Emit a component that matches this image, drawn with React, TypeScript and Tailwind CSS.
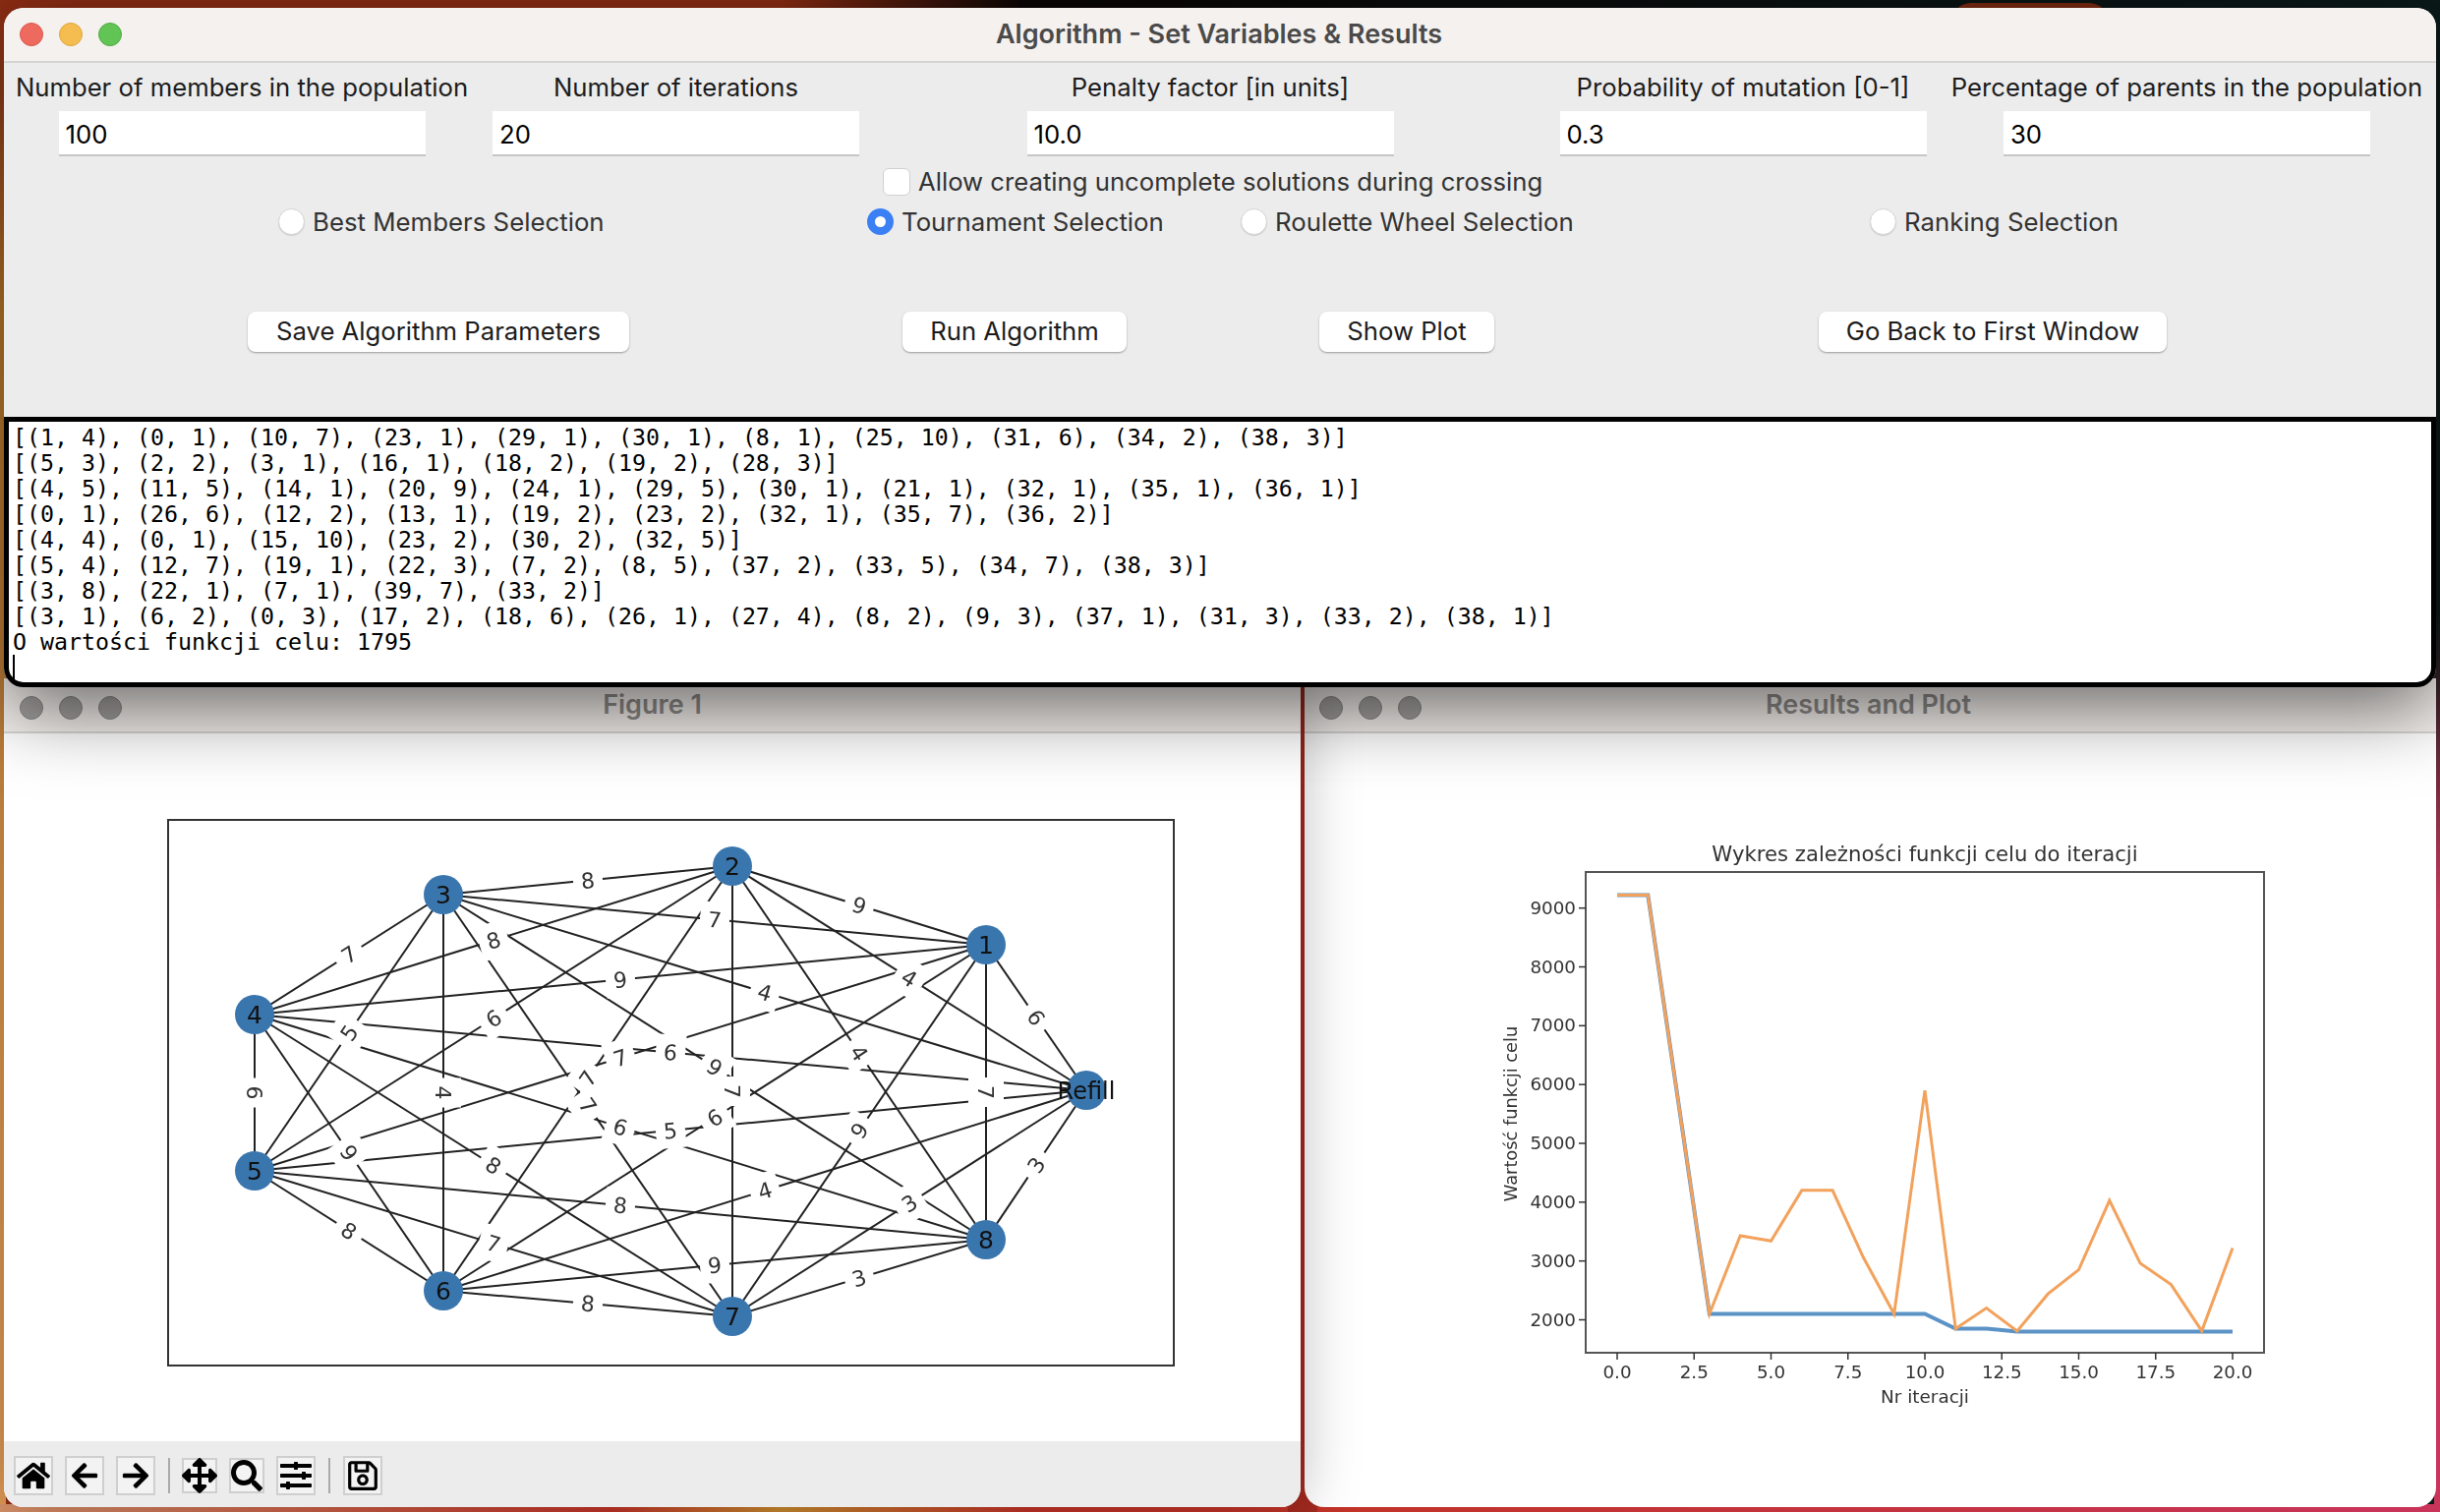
import { FaHome, FaArrowLeft, FaArrowRight, FaArrowsAlt, FaSearch, FaSlidersH, FaRegSave } from "react-icons/fa"

const nodes: Record<string, [number, number]> = {
  "1": [1003, 960],
  "2": [745, 880],
  "3": [451, 909],
  "4": [259, 1031],
  "5": [259, 1190],
  "6": [451, 1312],
  "7": [745, 1338],
  "8": [1003, 1260],
  Refill: [1105, 1108],
}

const edges: [string, string, number][] = [
  ["1", "2", 9], ["1", "3", 7], ["1", "4", 9], ["1", "5", 7], ["1", "6", 6], ["1", "7", 9], ["1", "8", 7], ["1", "Refill", 6],
  ["2", "3", 8], ["2", "4", 8], ["2", "5", 6], ["2", "6", 7], ["2", "7", 7], ["2", "8", 4], ["2", "Refill", 4],
  ["3", "4", 7], ["3", "5", 5], ["3", "6", 4], ["3", "7", 7], ["3", "8", 9], ["3", "Refill", 4],
  ["4", "5", 6], ["4", "6", 9], ["4", "7", 8], ["4", "8", 6], ["4", "Refill", 6],
  ["5", "6", 8], ["5", "7", 7], ["5", "8", 8], ["5", "Refill", 5],
  ["6", "7", 8], ["6", "8", 9], ["6", "Refill", 4],
  ["7", "8", 3], ["7", "Refill", 3],
  ["8", "Refill", 3],
]

const orange = [9220, 9220, 5660, 2100, 3430, 3340, 4200, 4200, 3060, 2100, 5900, 1850, 2200, 1810, 2440, 2850, 4030, 2960, 2600, 1810, 3220]
const blue = [9220, 9220, 5660, 2100, 2100, 2100, 2100, 2100, 2100, 2100, 2100, 1850, 1850, 1800, 1800, 1800, 1800, 1800, 1800, 1800, 1800]

const px = (i: number) => 1645 + i * 31.3
const py = (v: number) => 1340.5 - ((v - 2000) / 1000) * 59.83
const toPoints = (data: number[]) => data.map((v, i) => `${px(i)},${py(v)}`).join(" ")

const lines = [
  "[(1, 4), (0, 1), (10, 7), (23, 1), (29, 1), (30, 1), (8, 1), (25, 10), (31, 6), (34, 2), (38, 3)]",
  "[(5, 3), (2, 2), (3, 1), (16, 1), (18, 2), (19, 2), (28, 3)]",
  "[(4, 5), (11, 5), (14, 1), (20, 9), (24, 1), (29, 5), (30, 1), (21, 1), (32, 1), (35, 1), (36, 1)]",
  "[(0, 1), (26, 6), (12, 2), (13, 1), (19, 2), (23, 2), (32, 1), (35, 7), (36, 2)]",
  "[(4, 4), (0, 1), (15, 10), (23, 2), (30, 2), (32, 5)]",
  "[(5, 4), (12, 7), (19, 1), (22, 3), (7, 2), (8, 5), (37, 2), (33, 5), (34, 7), (38, 3)]",
  "[(3, 8), (22, 1), (7, 1), (39, 7), (33, 2)]",
  "[(3, 1), (6, 2), (0, 3), (17, 2), (18, 6), (26, 1), (27, 4), (8, 2), (9, 3), (37, 1), (31, 3), (33, 2), (38, 1)]",
  "O wartości funkcji celu: 1795",
]

function Field({ label, value }: { label: string; value: string }) {
  return (
    <div className="flex flex-col items-center">
      <div className="h-[30px] leading-[30px] text-[25.7px] text-[#1c1c1c] whitespace-nowrap">{label}</div>
      <input
        readOnly
        value={value}
        className="mt-[9px] w-[373px] h-[46px] bg-white pl-[7px] pt-[2px] text-[25.7px] text-black border-b-2 border-[#c6c6c6] outline-none"
      />
    </div>
  )
}

function Radio({ label, checked }: { label: string; checked?: boolean }) {
  return (
    <div className="flex items-center gap-[8px]">
      {checked ? (
        <div className="w-[27px] h-[27px] rounded-full bg-[#3b7ff5] flex items-center justify-center">
          <div className="w-[11px] h-[11px] rounded-full bg-white" />
        </div>
      ) : (
        <div className="w-[27px] h-[27px] rounded-full bg-white border border-[#d4d4d4] shadow-[0_1px_1px_rgba(0,0,0,0.12)]" />
      )}
      <span className="text-[25.8px] text-[#333] leading-[27px] whitespace-nowrap">{label}</span>
    </div>
  )
}

function Btn({ label, className }: { label: string; className: string }) {
  return (
    <button className={`h-[41px] bg-white rounded-[8px] text-[25.7px] text-[#1c1c1c] shadow-[0_1px_2px_rgba(0,0,0,0.35)] whitespace-nowrap ${className}`}>
      {label}
    </button>
  )
}

function Lights({ active }: { active?: boolean }) {
  const cls = "w-[24px] h-[24px] rounded-full"
  if (active)
    return (
      <div className="flex gap-[16px]">
        <div className={`${cls} bg-[#ee6a5f] border border-[#d9574d]`} />
        <div className={`${cls} bg-[#f5bd4f] border border-[#dfa63c]`} />
        <div className={`${cls} bg-[#61c454] border border-[#50ab44]`} />
      </div>
    )
  return (
    <div className="flex gap-[16px]">
      <div className={`${cls} bg-[#a5a3a1] border border-[#8c8a88]`} />
      <div className={`${cls} bg-[#a5a3a1] border border-[#8c8a88]`} />
      <div className={`${cls} bg-[#a5a3a1] border border-[#8c8a88]`} />
    </div>
  )
}

function ToolBtn({ children, small }: { children: React.ReactNode; small?: boolean }) {
  return (
    <div className={`flex items-center justify-center bg-[#f3f3f3] border-2 border-[#cfcfcf] text-black ${small ? "w-[36px] h-[36px]" : "w-[40px] h-[40px]"}`}>
      <div className="blur-[0.5px]">{children}</div>
    </div>
  )
}

function Graph() {
  return (
    <svg viewBox="150 820 1050 580" className="w-[1050px] h-[580px] ml-[146px] mt-[75px] blur-[0.5px]">
      <rect x="171" y="833" width="1023" height="555" fill="white" stroke="#333" strokeWidth="2" />
      {edges.map(([a, b]) => (
        <line key={a + b} x1={nodes[a][0]} y1={nodes[a][1]} x2={nodes[b][0]} y2={nodes[b][1]} stroke="#222" strokeWidth="2" />
      ))}
      {edges.map(([a, b, w]) => {
        const [x1, y1] = nodes[a]
        const [x2, y2] = nodes[b]
        const mx = (x1 + x2) / 2
        const my = (y1 + y2) / 2
        let ang = (Math.atan2(y2 - y1, x2 - x1) * 180) / Math.PI
        if (ang > 90) ang -= 180
        if (ang < -90) ang += 180
        return (
          <g key={a + b + "l"} transform={`rotate(${ang} ${mx} ${my})`}>
            <rect x={mx - 15} y={my - 18} width="30" height="36" fill="white" />
            <text x={mx} y={my + 8} textAnchor="middle" fontSize="22" fill="#333" fontFamily="'DejaVu Sans', sans-serif">
              {w}
            </text>
          </g>
        )
      })}
      {Object.entries(nodes).map(([k, [x, y]]) => (
        <g key={k}>
          <circle cx={x} cy={y} r="20" fill="#3a76ae" />
          <text x={x} y={y + 9} textAnchor="middle" fontSize={k === "Refill" ? 24 : 25} fill="#111" fontFamily="'DejaVu Sans', sans-serif">
            {k}
          </text>
        </g>
      ))}
    </svg>
  )
}

function Plot() {
  const font = "'DejaVu Sans', sans-serif"
  return (
    <svg viewBox="1500 840 850 600" className="w-[850px] h-[600px] ml-[173px] mt-[96px] blur-[0.7px]">
      <rect x="1613" y="885" width="690" height="489" fill="white" stroke="#555" strokeWidth="2" />
      {[2000, 3000, 4000, 5000, 6000, 7000, 8000, 9000].map((v) => (
        <g key={v}>
          <line x1="1606" x2="1613" y1={py(v)} y2={py(v)} stroke="#333" strokeWidth="1.5" />
          <text x="1603" y={py(v) + 6} textAnchor="end" fontSize="18.3" fill="#333" fontFamily={font}>
            {v}
          </text>
        </g>
      ))}
      {[0, 2.5, 5, 7.5, 10, 12.5, 15, 17.5, 20].map((v) => (
        <g key={v}>
          <line x1={px(v)} x2={px(v)} y1="1374" y2="1381" stroke="#333" strokeWidth="1.5" />
          <text x={px(v)} y="1400" textAnchor="middle" fontSize="18.3" fill="#333" fontFamily={font}>
            {v.toFixed(1)}
          </text>
        </g>
      ))}
      <polyline points={toPoints(blue)} fill="none" stroke="#5b93c6" strokeWidth="4" />
      <polyline points={toPoints(orange)} fill="none" stroke="#f2a25c" strokeWidth="3" />
      <text x="1958" y="874" textAnchor="middle" fontSize="21.2" fill="#333" fontFamily={font}>
        Wykres zależności funkcji celu do iteracji
      </text>
      <text x="1958" y="1425" textAnchor="middle" fontSize="18.4" fill="#333" fontFamily={font}>
        Nr iteracji
      </text>
      <text x="1543" y="1131" textAnchor="middle" fontSize="17.8" fill="#333" fontFamily={font} transform="rotate(-90 1543 1131)">
        Wartość funkcji celu
      </text>
    </svg>
  )
}

export default function App() {
  return (
    <div className="relative w-[2482px] h-[1538px] overflow-hidden font-['Inter',sans-serif] bg-[linear-gradient(90deg,#8f2d14_0%,#8f2d14_32%,#0a0605_42%,#0b1a1a_100%)]">
      {/* wallpaper edges */}
      <div className="absolute left-0 top-[8px] w-[6px] h-[1530px] bg-[linear-gradient(180deg,#8f2d14_0%,#c8802c_20%,#d8924a_60%,#e09a55_100%)]" />
      <div className="absolute right-0 top-[8px] w-[6px] h-[1530px] bg-[linear-gradient(180deg,#0b1a1a_0%,#0b1a1a_40%,#c23a58_60%,#c9345a_100%)]" />
      <div className="absolute left-0 bottom-0 w-full h-[8px] bg-[linear-gradient(90deg,#d8926a_0%,#c23328_25%,#c98a2e_32%,#c23328_42%,#c23328_55%,#c9345a_100%)]" />
      <div className="absolute left-[1310px] top-[690px] w-[30px] h-[850px] bg-[#a32a20]" />
      <div className="absolute left-[1985px] top-[3px] w-[160px] h-[20px] rounded-t-full bg-[#7c2a10]" />

      {/* right window */}
      <div className="absolute left-[1327px] top-[690px] w-[1151px] h-[843px] rounded-b-[20px] bg-white overflow-hidden flex flex-col">
        <div className="relative h-[56px] shrink-0 bg-[#f5f1ee] border-b-2 border-[#d8d6d4] flex items-center pt-[5px] pl-[15px]">
          <Lights />
          <div className="absolute left-0 right-0 top-[12px] text-center text-[27px] leading-[30px] font-semibold text-[#8e8c8a] pr-[4px]">Results and Plot</div>
        </div>
        <Plot />
      </div>

      {/* left window */}
      <div className="absolute left-[4px] top-[690px] w-[1319px] h-[843px] rounded-b-[20px] bg-white flex flex-col shadow-[0_0_60px_rgba(0,0,0,0.28)]">
        <div className="relative h-[56px] shrink-0 bg-[#f5f1ee] border-b-2 border-[#d8d6d4] flex items-center pt-[5px] pl-[16px]">
          <Lights />
          <div className="absolute left-0 right-0 top-[12px] text-center text-[27px] leading-[30px] font-semibold text-[#8e8c8a]">Figure 1</div>
        </div>
        <Graph />
        <div className="mt-auto h-[67px] bg-[#ececec] rounded-b-[20px] flex items-center pl-[10px] pt-[2px]">
          <ToolBtn><FaHome size={34} /></ToolBtn>
          <div className="ml-[12px]"><ToolBtn><FaArrowLeft size={30} /></ToolBtn></div>
          <div className="ml-[12px]"><ToolBtn><FaArrowRight size={30} /></ToolBtn></div>
          <div className="ml-[13px] w-[2px] h-[36px] bg-[#aaa]" />
          <div className="ml-[12px]"><ToolBtn small><FaArrowsAlt size={36} /></ToolBtn></div>
          <div className="ml-[12px]"><ToolBtn small><FaSearch size={32} /></ToolBtn></div>
          <div className="ml-[12px]"><ToolBtn><FaSlidersH size={32} /></ToolBtn></div>
          <div className="ml-[13px] w-[2px] h-[36px] bg-[#aaa]" />
          <div className="ml-[13px]"><ToolBtn><FaRegSave size={34} /></ToolBtn></div>
        </div>
      </div>

      {/* main window */}
      <div className="absolute left-[4px] top-[8px] w-[2474px] h-[691px] rounded-[20px] bg-[#ececec] flex flex-col shadow-[0_20px_80px_rgba(0,0,0,0.6)]">
        <div className="relative h-[56px] shrink-0 bg-[#f5f1ee] rounded-t-[20px] border-b-2 border-[#d6d4d2] flex items-center pl-[16px]">
          <Lights active />
          <div className="absolute left-0 right-0 top-[12px] text-center text-[27px] leading-[30px] font-semibold text-[#4a4a4a] pr-[2px]">Algorithm - Set Variables &amp; Results</div>
        </div>
        <div className="h-[360px] shrink-0">
          <div className="grid grid-cols-[484px_399px_688px_396px_507px] pt-[10px]">
            <Field label="Number of members in the population" value="100" />
            <Field label="Number of iterations" value="20" />
            <Field label="Penalty factor [in units]" value="10.0" />
            <Field label="Probability of mutation [0-1]" value="0.3" />
            <Field label="Percentage of parents in the population" value="30" />
          </div>
          <div className="mt-[12px] pl-[894px] flex items-center gap-[8px] h-[28px]">
            <div className="w-[28px] h-[28px] rounded-[6px] bg-white border border-[#d0d0d0]" />
            <span className="text-[25.7px] text-[#333] whitespace-nowrap">Allow creating uncomplete solutions during crossing</span>
          </div>
          <div className="mt-[13px] pl-[279px] flex">
            <div className="w-[599px]"><Radio label="Best Members Selection" /></div>
            <div className="w-[380px]"><Radio label="Tournament Selection" checked /></div>
            <div className="w-[640px]"><Radio label="Roulette Wheel Selection" /></div>
            <Radio label="Ranking Selection" />
          </div>
          <div className="mt-[78px] pl-[248px] flex">
            <Btn label="Save Algorithm Parameters" className="w-[388px]" />
            <Btn label="Run Algorithm" className="ml-[278px] w-[228px]" />
            <Btn label="Show Plot" className="ml-[196px] w-[178px]" />
            <Btn label="Go Back to First Window" className="ml-[330px] w-[354px]" />
          </div>
        </div>
        <div className="flex-1 bg-white border-[5px] border-black rounded-b-[20px] pl-[4px] pt-[3px] font-['DejaVu_Sans_Mono',monospace] text-[23.25px] leading-[26px] text-black">
          {lines.map((l) => (
            <div key={l} className="whitespace-pre">{l}</div>
          ))}
          <div className="w-[2px] h-[26px] bg-black" />
        </div>
      </div>
    </div>
  )
}
